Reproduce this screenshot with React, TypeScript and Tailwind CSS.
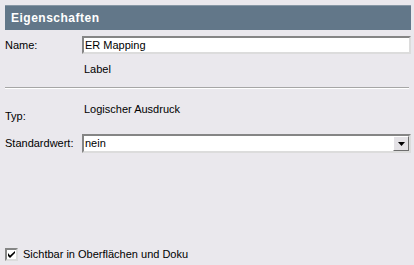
const font = "font-['Tahoma','Liberation_Sans',Arial,sans-serif]";

const App = () => {
  return (
    <div
      className={`w-[414px] h-[265px] bg-[#eae8ed] flex flex-col pt-[5px] pl-[5px] pr-[3px] text-[11px] text-black ${font}`}
    >
      {/* Header */}
      <div className="h-[25px] bg-[#627789] border-t border-[#8797a5] flex items-center pl-[6px]">
        <span className="text-white font-bold text-[12px] tracking-[0.5px] leading-none">Eigenschaften</span>
      </div>

      {/* Name */}
      <div className="flex items-center mt-[6px]">
        <span className="w-[77px] leading-[13px]">Name:</span>
        <div className="flex-1 h-[18px] bg-white border-2 border-t-[#858585] border-l-[#858585] border-r-[#dcdcdc] border-b-[#dcdcdc] flex items-center pl-[1px]">
          <span className="leading-[13px]">ER Mapping</span>
        </div>
      </div>
      <div className="ml-[79px] mt-[9px] leading-[13px]">Label</div>

      {/* Separator */}
      <div className="mt-[11px] mr-[2px] border-t border-[#a6a6a6] border-b border-b-white" />

      {/* Typ */}
      <div className="flex mt-[14px]">
        <span className="w-[79px] leading-[13px] mt-[7px]">Typ:</span>
        <span className="leading-[13px]">Logischer Ausdruck</span>
      </div>

      {/* Standardwert */}
      <div className="flex items-center mt-[11px]">
        <span className="w-[77px] leading-[13px]">Standardwert:</span>
        <div className="flex-1 h-[19px] bg-white border-2 border-t-[#858585] border-l-[#858585] border-r-[#dcdcdc] border-b-[#dcdcdc] flex items-center pl-[1px]">
          <span className="flex-1 leading-[13px]">nein</span>
          <div className="w-[16px] h-[15px] bg-[#e4e2e6] border border-t-white border-l-white border-r-[#6e6e6e] border-b-[#6e6e6e] flex items-center justify-center">
            <svg width="7" height="4" viewBox="0 0 7 4">
              <path d="M0 0h7L3.5 4z" fill="#000" />
            </svg>
          </div>
        </div>
      </div>

      <div className="flex-1" />

      {/* Checkbox */}
      <div className="flex items-center gap-[5px] mb-[4px]">
        <div className="w-[13px] h-[13px] bg-white border-2 border-t-[#858585] border-l-[#858585] border-r-[#dcdcdc] border-b-[#dcdcdc] flex items-center justify-center">
          <svg width="7" height="7" viewBox="0 0 7 7">
            <path d="M0 2v3l2 2 5-5V0L2 4.5z" fill="#000" />
          </svg>
        </div>
        <span className="leading-[13px]">Sichtbar in Oberflächen und Doku</span>
      </div>
    </div>
  );
};

export default App;
